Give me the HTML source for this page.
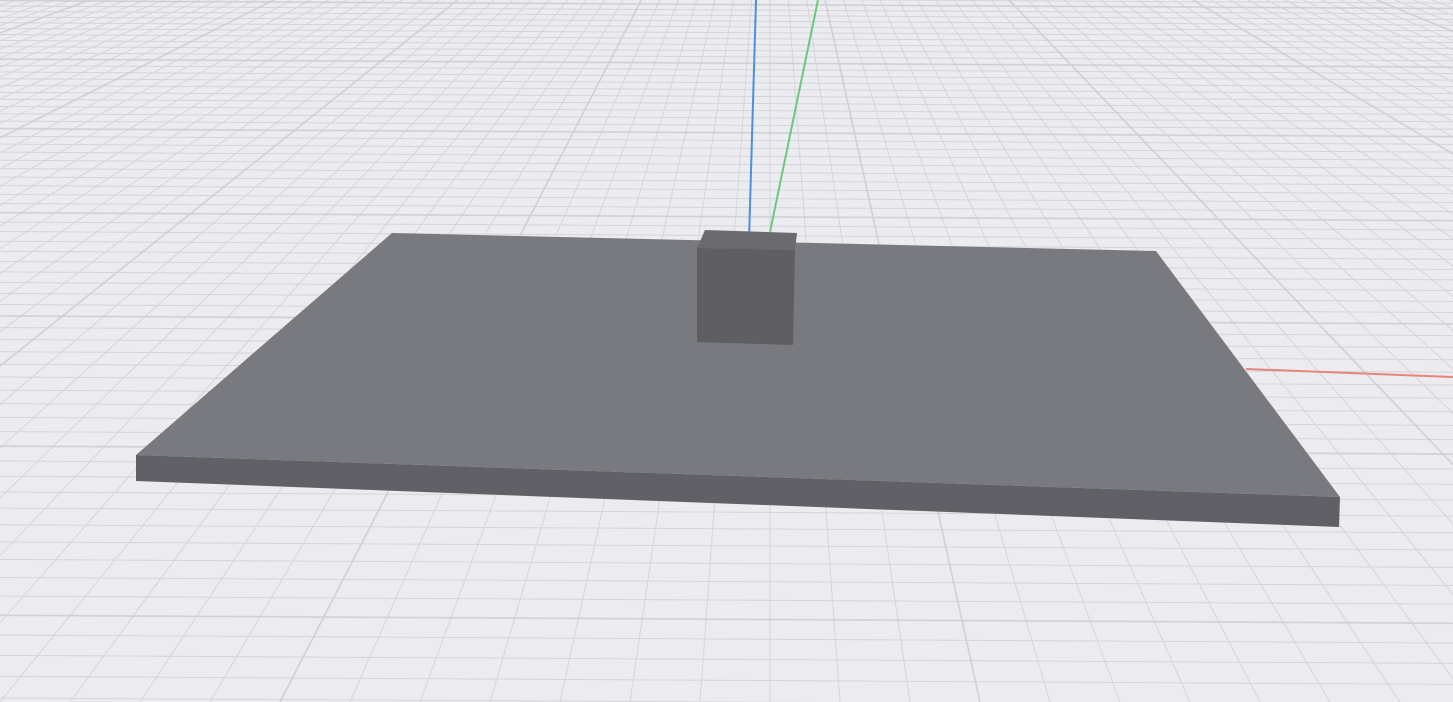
<!DOCTYPE html>
<html><head><meta charset="utf-8"><style>
html,body{margin:0;padding:0;background:#ecebf0;overflow:hidden}
svg{display:block}
</style></head><body>
<svg id="s" width="1453" height="702" viewBox="0 0 1453 702" xmlns="http://www.w3.org/2000/svg">
<rect width="1453" height="702" fill="#ecebf0"/>
<g id="grid" stroke="#d4d4da" stroke-width="1" fill="none"></g>
<g id="major" stroke="#c8c8ce" stroke-width="2" fill="none" opacity="0.45"></g>
<line x1="756" y1="0" x2="749" y2="240" stroke="#4a90e2" stroke-width="2"/>
<line x1="818" y1="0" x2="770" y2="232" stroke="#6cc77f" stroke-width="2"/>
<line x1="1246" y1="369" x2="1453" y2="377" stroke="#e8847c" stroke-width="2"/>
<polygon points="392,233 1156,251 1340,497 136,455" fill="#797a80"/>
<polygon points="136,455 1340,497 1339,527 136,481" fill="#616066"/>
<polygon points="705,230 797,233 795,250 697,248" fill="#6a6a6f"/>
<polygon points="697,248 795,250 793,345 697,342" fill="#5f5e63"/>
</svg>
<script>
(function(){
var g=document.getElementById('grid'),m=document.getElementById('major');
var V=-250,cx=770,s=70,ns='http://www.w3.org/2000/svg';
function ln(p,x1,y1,x2,y2){var l=document.createElementNS(ns,'line');l.setAttribute('x1',x1);l.setAttribute('y1',y1);l.setAttribute('x2',x2);l.setAttribute('y2',y2);p.appendChild(l);}
var H=702-V;
for(var i=-60;i<=60;i++){
 var xb=cx+i*s;
 var x0=cx+(xb-cx)*(0-V)/H;
 ln(g,x0,0,xb,702);
 if(((i%10)+10)%10==3) ln(m,x0,0,xb,702);
}
var V2=-680,A=86800,H2=702-V2;
var d0=A/H2;
for(var j=0;j<400;j++){
 var d=d0-1+j; if(d<=0)continue;
 var y=V2+A/d; if(y<-10)break;
 ln(g,0,y-4,1453,y+4);
 if(j%10==5) ln(m,0,y-4,1453,y+4);
}
})();
</script>
</body></html>
